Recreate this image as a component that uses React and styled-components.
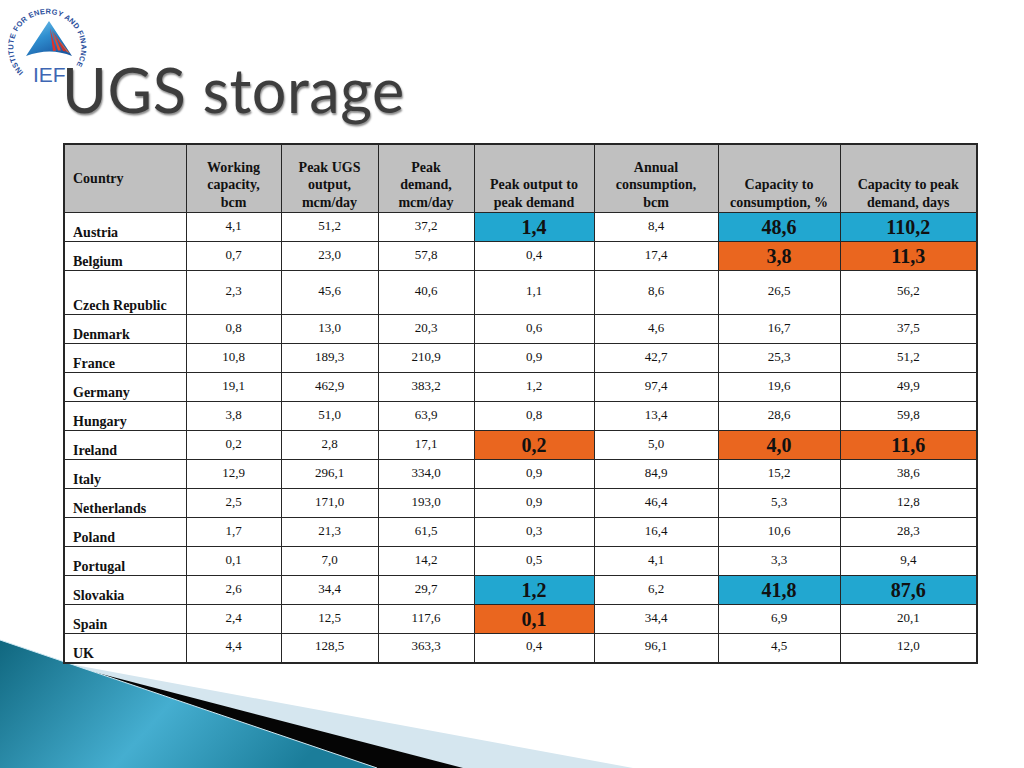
import React from "react"
import styled, { createGlobalStyle } from "styled-components"

const GlobalStyle = createGlobalStyle`
  html, body {
    margin: 0;
    padding: 0;
    background: #ffffff;
  }
`

const rows = [
  ["Austria", "4,1", "51,2", "37,2", ["1,4", "b"], "8,4", ["48,6", "b"], ["110,2", "b"]],
  ["Belgium", "0,7", "23,0", "57,8", "0,4", "17,4", ["3,8", "o"], ["11,3", "o"]],
  ["Czech Republic", "2,3", "45,6", "40,6", "1,1", "8,6", "26,5", "56,2"],
  ["Denmark", "0,8", "13,0", "20,3", "0,6", "4,6", "16,7", "37,5"],
  ["France", "10,8", "189,3", "210,9", "0,9", "42,7", "25,3", "51,2"],
  ["Germany", "19,1", "462,9", "383,2", "1,2", "97,4", "19,6", "49,9"],
  ["Hungary", "3,8", "51,0", "63,9", "0,8", "13,4", "28,6", "59,8"],
  ["Ireland", "0,2", "2,8", "17,1", ["0,2", "o"], "5,0", ["4,0", "o"], ["11,6", "o"]],
  ["Italy", "12,9", "296,1", "334,0", "0,9", "84,9", "15,2", "38,6"],
  ["Netherlands", "2,5", "171,0", "193,0", "0,9", "46,4", "5,3", "12,8"],
  ["Poland", "1,7", "21,3", "61,5", "0,3", "16,4", "10,6", "28,3"],
  ["Portugal", "0,1", "7,0", "14,2", "0,5", "4,1", "3,3", "9,4"],
  ["Slovakia", "2,6", "34,4", "29,7", ["1,2", "b"], "6,2", ["41,8", "b"], ["87,6", "b"]],
  ["Spain", "2,4", "12,5", "117,6", ["0,1", "o"], "34,4", "6,9", "20,1"],
  ["UK", "4,4", "128,5", "363,3", "0,4", "96,1", "4,5", "12,0"],
]

const headers = [
  "Working capacity, bcm",
  "Peak UGS output, mcm/day",
  "Peak demand, mcm/day",
  "Peak output to peak demand",
  "Annual consumption, bcm",
  "Capacity to consumption, %",
  "Capacity to peak demand, days",
]

const widths = [122, 95, 97, 96, 120, 124, 122, 137]

// IEF logo: ring of text, a sail, the letters
const Logo = () => (
  <LogoBox>
    <svg width="100" height="90" viewBox="0 0 100 90">
      <defs>
        <path id="ringPath" d="M23.6,72.3 A34,34 0 1 1 74.3,68.4" />
        <linearGradient id="sailBlue" x1="0" y1="0" x2="0.6" y2="1">
          <stop offset="0" stopColor="#7cc8ee" />
          <stop offset="0.5" stopColor="#2f8fd0" />
          <stop offset="1" stopColor="#1a5aa3" />
        </linearGradient>
      </defs>
      <text fontFamily="'Liberation Sans', Arial, sans-serif" fontSize="7.4" fontWeight="700" fill="#2a4e9c">
        <textPath href="#ringPath" textLength="152" lengthAdjust="spacing">
          INSTITUTE FOR ENERGY AND FINANCE
        </textPath>
      </text>
      <path d="M49,21 L72,56 Q50,47 26,56 Z" fill="url(#sailBlue)" />
      <path d="M50,28 L53,51 L56,50.5 Z" fill="#e0322a" />
      <path d="M51.5,29 L58,50.5 L61,50.5 Z" fill="#e94a2b" />
      <path d="M53,31 L63,51 L66,51.5 Z" fill="#d52d28" />
      <path d="M54,34 L67,52 L69.5,53 Z" fill="#e8602e" />
      <text x="33" y="82" fontFamily="'Liberation Sans', Arial, sans-serif" fontSize="21" fill="#3e66b3">
        IEF
      </text>
    </svg>
  </LogoBox>
)

const Decoration = () => (
  <DecorBox>
    <svg width="640" height="130" viewBox="0 638 640 130">
      <defs>
        <linearGradient id="teal" x1="0" y1="0" x2="1" y2="0.3">
          <stop offset="0" stopColor="#10677f" />
          <stop offset="0.55" stopColor="#45aed0" />
          <stop offset="1" stopColor="#1b7d9a" />
        </linearGradient>
      </defs>
      <polygon points="48,660 633,768 0,768" fill="#d5e6ef" />
      <polygon points="40,658 463,768 0,768" fill="#050505" />
      <polygon points="0,640 377,768 0,768" fill="url(#teal)" />
      <line x1="0" y1="640" x2="377" y2="768" stroke="#cfe9f3" strokeWidth="1" />
    </svg>
  </DecorBox>
)

const renderCell = (value, i) => {
  if (Array.isArray(value)) {
    return (
      <HotCell key={i} $tone={value[1]}>
        {value[0]}
      </HotCell>
    )
  }
  return <NumCell key={i}>{value}</NumCell>
}

const App = () => {
  return (
    <Slide>
      <GlobalStyle />
      <Decoration />
      <Header>
        <Logo />
        <Title>UGS storage</Title>
      </Header>
      <TableWrap>
        <DataTable>
          <colgroup>
            {widths.map((w, i) => (
              <col key={i} style={{ width: w }} />
            ))}
          </colgroup>
          <thead>
            <tr>
              <CountryHead>Country</CountryHead>
              {headers.map((h) => (
                <HeadCell key={h}>{h}</HeadCell>
              ))}
            </tr>
          </thead>
          <tbody>
            {rows.map((r) => (
              <Row key={r[0]} $tall={r[0] === "Czech Republic"}>
                <CountryCell>{r[0]}</CountryCell>
                {r.slice(1).map(renderCell)}
              </Row>
            ))}
          </tbody>
        </DataTable>
      </TableWrap>
    </Slide>
  )
}

const Slide = styled.div`
  position: relative;
  width: 1024px;
  height: 768px;
  overflow: hidden;
  background: #ffffff;
`

const DecorBox = styled.div`
  position: absolute;
  left: 0;
  bottom: 0;
  width: 640px;
  height: 130px;
  line-height: 0;
`

const Header = styled.div`
  position: relative;
  height: 143px;
  padding-left: 62px;
  box-sizing: border-box;
`

const LogoBox = styled.div`
  position: absolute;
  left: 0;
  top: 0;
  line-height: 0;
`

const Title = styled.h1`
  position: relative;
  margin: 0;
  padding-top: 54px;
  font-family: "Lato", "DejaVu Sans", sans-serif;
  font-weight: 400;
  font-size: 61px;
  line-height: 72px;
  letter-spacing: 0.6px;
  color: #3d3d3d;
  text-shadow: 1px 2px 2px rgba(0, 0, 0, 0.45), -1px -1px 0 rgba(255, 255, 255, 0.4);
`

const TableWrap = styled.div`
  position: relative;
  padding-left: 63px;
`

const DataTable = styled.table`
  border-collapse: collapse;
  table-layout: fixed;
  width: 913px;
  font-family: "Liberation Serif", "Times New Roman", serif;
  font-size: 13px;
  color: #111;
  border: 2px solid #262626;

  td, th {
    border: 1.5px solid #262626;
  }
`

const HeadCell = styled.th`
  height: 66px;
  background: #c0c0c0;
  font-size: 14px;
  font-weight: 700;
  text-align: center;
  vertical-align: bottom;
  line-height: 17.5px;
  padding: 0 10px 1px;
`

const CountryHead = styled(HeadCell)`
  text-align: left;
  vertical-align: middle;
  padding: 0 8px;
`

const Row = styled.tr`
  height: ${(p) => (p.$tall ? "44px" : "29px")};
`

const CountryCell = styled.td`
  font-size: 14px;
  font-weight: 700;
  text-align: left;
  vertical-align: bottom;
  padding: 0 8px 0;
  line-height: 16px;
`

const NumCell = styled.td`
  text-align: center;
  vertical-align: middle;
  padding: 0 0 3px;
  line-height: 16px;
`

const HotCell = styled(NumCell)`
  font-weight: 700;
  font-size: 20px;
  padding: 0;
  background: ${(p) => (p.$tone === "b" ? "#22a7d0" : "#ea661f")};
`

export default App
